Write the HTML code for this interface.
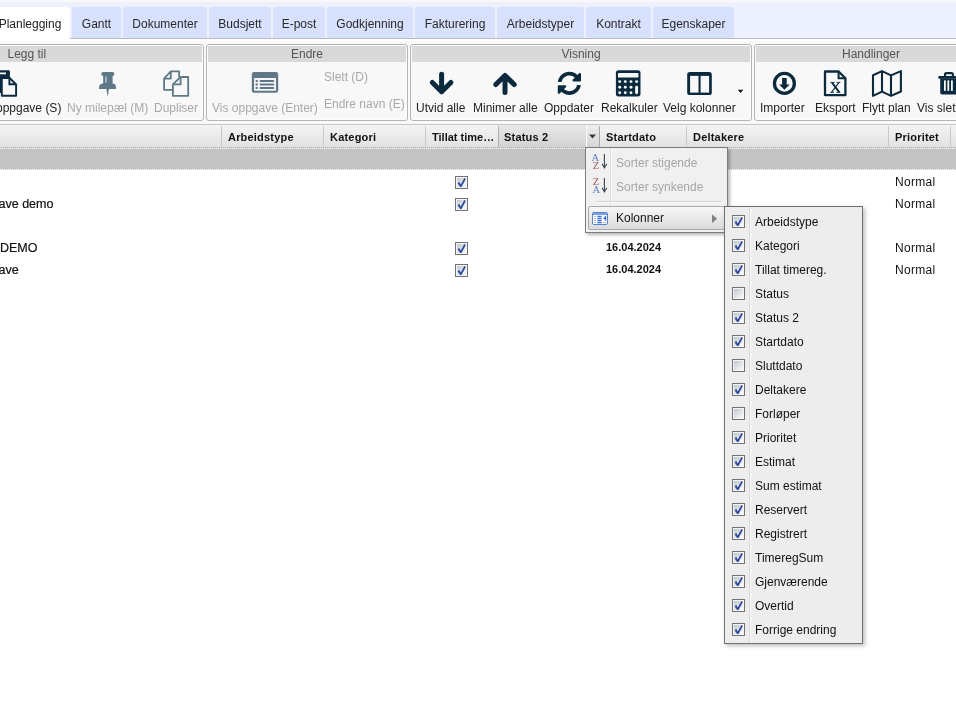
<!DOCTYPE html>
<html><head><meta charset="utf-8">
<style>
*{box-sizing:border-box;margin:0;padding:0}
html,body{width:956px;height:704px;overflow:hidden;-webkit-font-smoothing:antialiased;background:#fff;font-family:"Liberation Sans",sans-serif;font-size:12px;color:#222}
.a{position:absolute;white-space:nowrap}
.t12{font-size:12px;line-height:14px}
.t11{font-size:11px;line-height:13px}
.tab{position:absolute;top:7px;height:31px;background:#d7e0fc;border-radius:3px 3px 0 0}
.tab span{position:absolute;top:10px;left:0;right:0;text-align:center;font-size:12px;line-height:14px;color:#2a2a2a}
.grp{position:absolute;top:44px;height:77px;border:1px solid #b4b4b4;border-radius:3px;background:#f8f8f8;box-shadow:inset 0 0 0 1px #fdfdfd}
.gh{position:absolute;top:1px;left:1px;right:1px;height:16px;background:#d9d9d9;color:#555;font-size:12px;line-height:14px;text-align:center}
.gh span{position:relative;top:1px}
.lbl{position:absolute;white-space:nowrap;top:101px;font-size:12px;line-height:14px;color:#222}
.dis{color:#a8a8a8}
.sep{position:absolute;top:126px;width:1px;height:21px;background:#c9c9c9}
.hd{position:absolute;white-space:nowrap;top:131px;font-size:11px;line-height:13px;font-weight:bold;color:#111;letter-spacing:0.2px}
.cb{position:absolute;width:13px;height:13px;border:1px solid #727272;background:linear-gradient(135deg,#b9bfca 0%,#dfe2e8 50%,#fff 100%);box-shadow:inset 0 0 0 1px #f4f4f4}
.cb svg{position:absolute;left:-1px;top:-1px}
.nm{font-size:12.5px;line-height:15px;color:#111;-webkit-text-stroke:0.2px #111}
.mi{position:absolute;white-space:nowrap;font-size:12px;line-height:14px;color:#111}
</style></head><body><div style="position:absolute;left:0;top:0;width:956px;height:704px;will-change:transform;overflow:hidden">

<!-- top strip -->
<div class="a" style="left:0;top:0;width:956px;height:2px;background:#f8f8f8"></div>
<div class="a" style="left:0;top:2px;width:956px;height:36px;background:#edf1fd"></div>
<div class="a" style="left:70px;top:38px;width:886px;height:1px;background:#bcbcbc"></div>
<div class="a" style="left:0;top:41px;width:956px;height:83px;background:#f9f9f9"></div>
<div class="a" style="left:0;top:39px;width:956px;height:2px;background:#fff"></div>

<!-- tabs -->
<div class="tab" style="left:-10px;width:80px;height:32px;background:#fff"><span style="left:0;right:0;padding-left:0px;color:#222">Planlegging</span></div>
<div class="tab" style="left:72px;width:49px"><span>Gantt</span></div>
<div class="tab" style="left:123px;width:84px"><span>Dokumenter</span></div>
<div class="tab" style="left:209px;width:62px"><span>Budsjett</span></div>
<div class="tab" style="left:273px;width:52px"><span>E-post</span></div>
<div class="tab" style="left:327px;width:86px"><span>Godkjenning</span></div>
<div class="tab" style="left:415px;width:80px"><span>Fakturering</span></div>
<div class="tab" style="left:497px;width:87px"><span>Arbeidstyper</span></div>
<div class="tab" style="left:586px;width:65px"><span>Kontrakt</span></div>
<div class="tab" style="left:653px;width:81px"><span>Egenskaper</span></div>

<!-- groups -->
<div class="grp" style="left:-40px;width:244px"><div class="gh" style="text-align:left;padding-left:45.5px"><span>Legg til</span></div></div>
<div class="grp" style="left:206px;width:202px"><div class="gh"><span>Endre</span></div></div>
<div class="grp" style="left:410px;width:342px"><div class="gh"><span>Visning</span></div></div>
<div class="grp" style="left:754px;width:240px"><div class="gh" style="text-align:left;padding-left:86px"><span>Handlinger</span></div></div>

<!-- labels -->
<div class="lbl" style="left:-4px">oppgave (S)</div>
<div class="lbl dis" style="left:67px">Ny milepæl (M)</div>
<div class="lbl dis" style="left:154px">Dupliser</div>
<div class="lbl dis" style="left:212px">Vis oppgave (Enter)</div>
<div class="lbl dis" style="left:324px;top:70px">Slett (D)</div>
<div class="lbl dis" style="left:324px;top:97px">Endre navn (E)</div>
<div class="lbl" style="left:416px">Utvid alle</div>
<div class="lbl" style="left:473px">Minimer alle</div>
<div class="lbl" style="left:544px">Oppdater</div>
<div class="lbl" style="left:601px">Rekalkuler</div>
<div class="lbl" style="left:663px">Velg kolonner</div>
<div class="lbl" style="left:760px">Importer</div>
<div class="lbl" style="left:815px">Eksport</div>
<div class="lbl" style="left:862px">Flytt plan</div>
<div class="lbl" style="left:917px">Vis slettede</div>

<svg class="a" style="left:0;top:0;overflow:visible" width="956" height="704" viewBox="0 0 956 704">
<g fill="#0c2a3e">
<!-- ny oppgave (clipped) -->
<path d="M-12 70.3H8.7a1.2 1.2 0 0 1 1.2 1.2V77H2.2V93H-12Z"/>
<rect x="-12" y="72.5" width="18" height="1.8" fill="#f8f8f8"/>
</g>
<path d="M1.8 78H9.6L16.1 84.5V95.8H1.8Z" fill="#f8f8f8" stroke="#0c2a3e" stroke-width="1.9" stroke-linejoin="round"/>
<path d="M9.4 77.6V84.3H16" fill="none" stroke="#0c2a3e" stroke-width="1.9"/>
<!-- pin -->
<g fill="#5f7887">
<rect x="101.2" y="72" width="13.2" height="4" rx="2"/>
<rect x="103.2" y="75" width="9.4" height="9.5"/>
<path d="M99 89V87.4C99 85.2 101 83.6 103.2 83.6H112.6C114.8 83.6 116 85.2 116 87.4V89Z"/>
<path d="M106.3 88.5H109.1L107.7 96.8Z"/>
</g>
<rect x="105" y="76.5" width="2" height="6.3" fill="#a3b2bb"/>
<!-- duplicate -->
<g fill="none" stroke="#5f7887" stroke-width="1.8" stroke-linejoin="round">
<path d="M179.1 77V71.4H170.8L164.1 78.6V89.8H172.8"/>
<path d="M170.8 71.6V78.6H164.2"/>
<path d="M180.6 77H188.2V95.8H172.9V84.4L180.6 76.9Z"/>
<path d="M180.6 77.2V84.4H173"/>
</g>
<!-- vis oppgave -->
<rect x="251.8" y="72" width="26.4" height="20.7" rx="2.2" fill="#5f7887"/>
<rect x="254.1" y="78" width="21.9" height="12.7" fill="#f8f8f8"/>
<g fill="#5f7887">
<circle cx="256.7" cy="80.9" r="1.2"/><circle cx="256.7" cy="84.4" r="1.2"/><circle cx="256.7" cy="87.9" r="1.2"/>
<rect x="259.5" y="79.9" width="14.8" height="2" rx="1"/><rect x="259.5" y="83.4" width="14.8" height="2" rx="1"/><rect x="259.5" y="86.9" width="14.8" height="2" rx="1"/>
</g>
<!-- arrows -->
<g fill="none" stroke="#0c2a3e" stroke-width="5" stroke-linecap="round" stroke-linejoin="round">
<path d="M441.6 74.3V90.5M432.3 82.4L441.6 91.7L450.9 82.4"/>
<path d="M505 92.4V76M495.8 84.6L505 75.4L514.2 84.6"/>
</g>
<!-- refresh -->
<path transform="translate(557.4 71.4) scale(0.0468)" fill="#0c2a3e" d="M370.72 133.28C339.458 104.008 298.888 87.962 255.848 88c-77.458.068-144.328 53.178-162.791 126.85-1.344 5.363-6.122 9.15-11.651 9.15H24.103c-7.498 0-13.194-6.807-11.807-14.176C33.933 94.924 134.813 8 256 8c66.448 0 126.791 26.136 171.315 68.685L463.03 40.97C478.149 25.851 504 36.559 504 57.941V192c0 13.255-10.745 24-24 24H345.941c-21.382 0-32.090-25.851-16.971-40.971l41.75-41.749zM32 296h134.059c21.382 0 32.090 25.851 16.971 40.971l-41.75 41.750c31.262 29.273 71.835 45.319 114.876 45.280 77.418-.07 144.315-53.144 162.787-126.849 1.344-5.363 6.122-9.150 11.651-9.150h57.304c7.498 0 13.194 6.807 11.807 14.176C478.067 417.076 377.187 504 256 504c-66.448 0-126.791-26.136-171.315-68.685L48.970 471.030C33.851 486.149 8 475.441 8 454.059V320c0-13.255 10.745-24 24-24z"/>
<!-- calculator -->
<rect x="615.9" y="70.3" width="24.6" height="26.1" rx="2.6" fill="#0c2a3e"/>
<rect x="618" y="72.9" width="20.4" height="4.7" rx="0.6" fill="#f8f8f8"/>
<g fill="#f8f8f8">
<circle cx="619.7" cy="81.6" r="1.45"/><circle cx="625.3" cy="81.6" r="1.45"/><circle cx="631" cy="81.6" r="1.45"/><circle cx="636.6" cy="81.6" r="1.45"/>
<circle cx="619.7" cy="87.2" r="1.45"/><circle cx="625.3" cy="87.2" r="1.45"/><circle cx="631" cy="87.2" r="1.45"/>
<circle cx="619.7" cy="92.8" r="1.45"/><circle cx="625.3" cy="92.8" r="1.45"/><circle cx="631" cy="92.8" r="1.45"/>
<rect x="635.15" y="85.7" width="2.9" height="8.6" rx="1.45"/>
</g>
<!-- columns -->
<rect x="687.2" y="72.1" width="24.6" height="22.9" rx="2.6" fill="#0c2a3e"/>
<rect x="690.1" y="75.9" width="8.4" height="16.7" fill="#f8f8f8"/>
<rect x="700.6" y="75.9" width="8.5" height="16.7" fill="#f8f8f8"/>
<path d="M737.8 89.7H743.3L740.55 93.1Z" fill="#111"/>
<!-- import -->
<circle cx="784.4" cy="83.4" r="9.95" fill="none" stroke="#0c2a3e" stroke-width="3.3"/>
<path d="M782.1 78.1H786.7V84.4H789.7L784.4 89.7L779.1 84.4H782.1Z" fill="#0c2a3e"/>
<!-- excel -->
<path d="M825 71.5H838.6L845.4 78.3V95.2H825Z" fill="none" stroke="#0c2a3e" stroke-width="2.3" stroke-linejoin="round"/>
<path d="M838.6 71.5V78.3H845.4" fill="none" stroke="#0c2a3e" stroke-width="2"/>
<g stroke="#0c2a3e" fill="none">
<path d="M832 82.6L839.3 92.4" stroke-width="1.9"/>
<path d="M838.9 82.6L831.5 92.4" stroke-width="1.1"/>
<path d="M830.4 82.4H834.6M836.6 82.4H840.3M830.4 92.4H834M836.5 92.4H840.4" stroke-width="0.9"/>
</g>
<!-- map -->
<g fill="none" stroke="#0c2a3e" stroke-width="2.1" stroke-linejoin="round">
<path d="M873 75.2L882 71.1L891 75.4L900.9 71.1V91.5L891 95.9L882 91.6L873 95.9Z"/>
<path d="M882 71.2V91.6M891 75.4V95.8"/>
</g>
<!-- trash -->
<g fill="#0c2a3e">
<path d="M944 77V74.2C944 72.8 945 72 946.4 72H951.4C952.8 72 953.9 72.8 953.9 74.2V77H951.8V74.3H946.1V77Z"/>
<rect x="938.3" y="76" width="25" height="2.7" rx="0.8"/>
<path d="M940.2 78.6H960V92.6C960 93.8 959.2 94.6 958 94.6H942.2C941 94.6 940.2 93.8 940.2 92.6Z"/>
</g>
<g fill="#f8f8f8">
<rect x="944" y="80.4" width="1.8" height="10.5"/><rect x="947.4" y="80.4" width="1.8" height="10.5"/><rect x="951" y="80.4" width="1.8" height="10.5"/>
</g>
</svg>


<!-- grid header -->
<div class="a" style="left:0;top:124px;width:956px;height:1px;background:#c6c6c6"></div>
<div class="a" style="left:0;top:125px;width:956px;height:22px;background:linear-gradient(#f4f4f4,#e2e2e2)"></div>
<div class="a" style="left:499px;top:125px;width:87px;height:22px;background:linear-gradient(#e9e9e9,#d2d2d2)"></div>
<div class="a" style="left:587px;top:125px;width:12px;height:22px;background:linear-gradient(#eeeeee,#d6d6d6)"></div>
<div class="sep" style="left:221px"></div>
<div class="sep" style="left:323px"></div>
<div class="sep" style="left:425px"></div>
<div class="sep" style="left:498px;background:#b0b0b0"></div>
<div class="sep" style="left:586px;background:#fafafa"></div>
<div class="sep" style="left:599px;background:#a8a8a8"></div>
<div class="sep" style="left:686px"></div>
<div class="sep" style="left:888px"></div>
<div class="sep" style="left:950px"></div>
<div class="hd" style="left:228px">Arbeidstype</div>
<div class="hd" style="left:330px">Kategori</div>
<div class="hd" style="left:432px;letter-spacing:0">Tillat time…</div>
<div class="hd" style="left:504px">Status 2</div>
<div class="hd" style="left:606px">Startdato</div>
<div class="hd" style="left:693px">Deltakere</div>
<div class="hd" style="left:895px">Prioritet</div>
<svg class="a" style="left:588px;top:133px" width="9" height="7"><path d="M1 1.5 H8 L4.5 5.5 Z" fill="#3a3a3a"/></svg>

<!-- group row -->
<div class="a" style="left:0;top:147px;width:956px;height:23px;background:#c4c4c4"></div>
<div class="a" style="left:0;top:148px;width:956px;height:1px;background:repeating-linear-gradient(90deg,#fff 0 1px,transparent 1px 2px)"></div>
<div class="a" style="left:0;top:169px;width:956px;height:1px;background:repeating-linear-gradient(90deg,#fff 0 1px,#c4c4c4 1px 2px)"></div>

<!-- rows -->
<div class="a nm" style="left:-1.5px;top:196.5px">ave demo</div>
<div class="a nm" style="left:0px;top:240.5px">DEMO</div>
<div class="a nm" style="left:-1.5px;top:262.5px">ave</div>

<div class="a t11" style="left:606px;top:241px;font-weight:bold;color:#111">16.04.2024</div>
<div class="a t11" style="left:606px;top:263px;font-weight:bold;color:#111">16.04.2024</div>
<div class="a t12" style="letter-spacing:0.3px;left:895px;top:174.5px;color:#111">Normal</div>
<div class="a t12" style="letter-spacing:0.3px;left:895px;top:196.5px;color:#111">Normal</div>
<div class="a t12" style="letter-spacing:0.3px;left:895px;top:240.5px;color:#111">Normal</div>
<div class="a t12" style="letter-spacing:0.3px;left:895px;top:262.5px;color:#111">Normal</div>

<div class="cb" style="left:455px;top:176px"><svg width="13" height="13" viewBox="0 0 13 13"><path d="M2.6 7.2L4.3 6.1L5.8 8.4L9.3 2.1L10.8 3.1L6.5 11L5.1 11Z" fill="#2e4c9c"/></svg></div>
<div class="cb" style="left:455px;top:198px"><svg width="13" height="13" viewBox="0 0 13 13"><path d="M2.6 7.2L4.3 6.1L5.8 8.4L9.3 2.1L10.8 3.1L6.5 11L5.1 11Z" fill="#2e4c9c"/></svg></div>
<div class="cb" style="left:455px;top:242px"><svg width="13" height="13" viewBox="0 0 13 13"><path d="M2.6 7.2L4.3 6.1L5.8 8.4L9.3 2.1L10.8 3.1L6.5 11L5.1 11Z" fill="#2e4c9c"/></svg></div>
<div class="cb" style="left:455px;top:264px"><svg width="13" height="13" viewBox="0 0 13 13"><path d="M2.6 7.2L4.3 6.1L5.8 8.4L9.3 2.1L10.8 3.1L6.5 11L5.1 11Z" fill="#2e4c9c"/></svg></div>

<!-- column menu -->
<div class="a" style="left:585px;top:147px;width:143px;height:86px;background:#f0f0f0;border:1px solid #7c7c7c;box-shadow:2px 2px 3px rgba(0,0,0,0.28)"></div>
<div class="a" style="left:610px;top:148px;width:1px;height:84px;background:#dcdcdc"></div>
<div class="a" style="left:611px;top:148px;width:1px;height:84px;background:#fbfbfb"></div>
<div class="a" style="left:597px;top:201px;width:125px;height:1px;background:#d2d2d2"></div>
<div class="a" style="left:597px;top:202px;width:125px;height:1px;background:#fdfdfd"></div>
<svg class="a" style="left:588px;top:150px" width="22" height="48" viewBox="0 0 22 48">
<g font-family="Liberation Serif" font-size="10.5">
<text x="3.6" y="11" fill="#5b7ec4">A</text><text x="4.8" y="19" fill="#a05a5a">Z</text>
<text x="4.8" y="35" fill="#a05a5a">Z</text><text x="4.6" y="43" fill="#5b7ec4">A</text>
</g>
<g stroke="#3c4450" fill="none" stroke-width="1.1">
<path d="M16.4 4V17.5M14 13.8L16.4 18L18.8 13.8"/>
<path d="M16.4 28V41.5M14 37.8L16.4 42L18.8 37.8"/>
</g>
</svg>
<div class="mi" style="left:616px;top:155.5px;color:#a6a6a6">Sorter stigende</div>
<div class="mi" style="left:616px;top:179.5px;color:#a6a6a6">Sorter synkende</div>
<div class="a" style="left:588px;top:206px;width:137px;height:24px;border:1px solid #a9a9a9;border-radius:2px;background:linear-gradient(#f8f8f8,#dadada)"></div>
<svg class="a" style="left:592px;top:212px" width="16" height="13" viewBox="0 0 16 13">
<rect x="0.5" y="0.5" width="15" height="12" rx="1.5" fill="#fff" stroke="#5583cf"/>
<rect x="1" y="1" width="14" height="2" fill="#7aa3e2"/>
<rect x="4.8" y="3" width="5.4" height="9" fill="#d5e2f8"/>
<g fill="#3a6be0"><rect x="5.6" y="4" width="3.8" height="1.1"/><rect x="5.6" y="6" width="3.8" height="1.1"/><rect x="5.6" y="8" width="3.8" height="1.1"/><rect x="5.6" y="10" width="3.8" height="1.1"/></g>
<g fill="#b0b0b0"><rect x="2" y="4" width="2" height="0.8"/><rect x="2" y="6" width="2" height="0.8"/><rect x="2" y="8" width="2" height="0.8"/><rect x="2" y="10" width="2" height="0.8"/><rect x="11" y="10" width="3" height="0.9"/></g>
<path d="M11.2 6.3L14 4V8.6Z" fill="#2f62e0"/>
<rect x="13.2" y="4" width="1" height="4.6" fill="#2f62e0"/>
</svg>
<div class="mi" style="left:616px;top:211px;color:#141414">Kolonner</div>
<svg class="a" style="left:711px;top:214px" width="8" height="10"><path d="M1 0.6L6.2 4.8L1 9Z" fill="#808080"/></svg>

<!-- submenu -->
<div class="a" style="left:724px;top:206px;width:139px;height:438px;background:#ededed;border:1px solid #6f6f6f;box-shadow:2px 2px 4px rgba(0,0,0,0.25)"></div>
<div class="a" style="left:749px;top:207px;width:1px;height:436px;background:#d9d9d9"></div>
<div class="a" style="left:750px;top:207px;width:1px;height:436px;background:#fafafa"></div>
<div class="cb" style="left:732px;top:215px"><svg width="13" height="13" viewBox="0 0 13 13"><path d="M2.6 7.2L4.3 6.1L5.8 8.4L9.3 2.1L10.8 3.1L6.5 11L5.1 11Z" fill="#2e4c9c"/></svg></div><div class="mi" style="left:755px;top:215px">Arbeidstype</div>
<div class="cb" style="left:732px;top:239px"><svg width="13" height="13" viewBox="0 0 13 13"><path d="M2.6 7.2L4.3 6.1L5.8 8.4L9.3 2.1L10.8 3.1L6.5 11L5.1 11Z" fill="#2e4c9c"/></svg></div><div class="mi" style="left:755px;top:239px">Kategori</div>
<div class="cb" style="left:732px;top:263px"><svg width="13" height="13" viewBox="0 0 13 13"><path d="M2.6 7.2L4.3 6.1L5.8 8.4L9.3 2.1L10.8 3.1L6.5 11L5.1 11Z" fill="#2e4c9c"/></svg></div><div class="mi" style="left:755px;top:263px">Tillat timereg.</div>
<div class="cb" style="left:732px;top:287px"></div><div class="mi" style="left:755px;top:287px">Status</div>
<div class="cb" style="left:732px;top:311px"><svg width="13" height="13" viewBox="0 0 13 13"><path d="M2.6 7.2L4.3 6.1L5.8 8.4L9.3 2.1L10.8 3.1L6.5 11L5.1 11Z" fill="#2e4c9c"/></svg></div><div class="mi" style="left:755px;top:311px">Status 2</div>
<div class="cb" style="left:732px;top:335px"><svg width="13" height="13" viewBox="0 0 13 13"><path d="M2.6 7.2L4.3 6.1L5.8 8.4L9.3 2.1L10.8 3.1L6.5 11L5.1 11Z" fill="#2e4c9c"/></svg></div><div class="mi" style="left:755px;top:335px">Startdato</div>
<div class="cb" style="left:732px;top:359px"></div><div class="mi" style="left:755px;top:359px">Sluttdato</div>
<div class="cb" style="left:732px;top:383px"><svg width="13" height="13" viewBox="0 0 13 13"><path d="M2.6 7.2L4.3 6.1L5.8 8.4L9.3 2.1L10.8 3.1L6.5 11L5.1 11Z" fill="#2e4c9c"/></svg></div><div class="mi" style="left:755px;top:383px">Deltakere</div>
<div class="cb" style="left:732px;top:407px"></div><div class="mi" style="left:755px;top:407px">Forløper</div>
<div class="cb" style="left:732px;top:431px"><svg width="13" height="13" viewBox="0 0 13 13"><path d="M2.6 7.2L4.3 6.1L5.8 8.4L9.3 2.1L10.8 3.1L6.5 11L5.1 11Z" fill="#2e4c9c"/></svg></div><div class="mi" style="left:755px;top:431px">Prioritet</div>
<div class="cb" style="left:732px;top:455px"><svg width="13" height="13" viewBox="0 0 13 13"><path d="M2.6 7.2L4.3 6.1L5.8 8.4L9.3 2.1L10.8 3.1L6.5 11L5.1 11Z" fill="#2e4c9c"/></svg></div><div class="mi" style="left:755px;top:455px">Estimat</div>
<div class="cb" style="left:732px;top:479px"><svg width="13" height="13" viewBox="0 0 13 13"><path d="M2.6 7.2L4.3 6.1L5.8 8.4L9.3 2.1L10.8 3.1L6.5 11L5.1 11Z" fill="#2e4c9c"/></svg></div><div class="mi" style="left:755px;top:479px">Sum estimat</div>
<div class="cb" style="left:732px;top:503px"><svg width="13" height="13" viewBox="0 0 13 13"><path d="M2.6 7.2L4.3 6.1L5.8 8.4L9.3 2.1L10.8 3.1L6.5 11L5.1 11Z" fill="#2e4c9c"/></svg></div><div class="mi" style="left:755px;top:503px">Reservert</div>
<div class="cb" style="left:732px;top:527px"><svg width="13" height="13" viewBox="0 0 13 13"><path d="M2.6 7.2L4.3 6.1L5.8 8.4L9.3 2.1L10.8 3.1L6.5 11L5.1 11Z" fill="#2e4c9c"/></svg></div><div class="mi" style="left:755px;top:527px">Registrert</div>
<div class="cb" style="left:732px;top:551px"><svg width="13" height="13" viewBox="0 0 13 13"><path d="M2.6 7.2L4.3 6.1L5.8 8.4L9.3 2.1L10.8 3.1L6.5 11L5.1 11Z" fill="#2e4c9c"/></svg></div><div class="mi" style="left:755px;top:551px">TimeregSum</div>
<div class="cb" style="left:732px;top:575px"><svg width="13" height="13" viewBox="0 0 13 13"><path d="M2.6 7.2L4.3 6.1L5.8 8.4L9.3 2.1L10.8 3.1L6.5 11L5.1 11Z" fill="#2e4c9c"/></svg></div><div class="mi" style="left:755px;top:575px">Gjenværende</div>
<div class="cb" style="left:732px;top:599px"><svg width="13" height="13" viewBox="0 0 13 13"><path d="M2.6 7.2L4.3 6.1L5.8 8.4L9.3 2.1L10.8 3.1L6.5 11L5.1 11Z" fill="#2e4c9c"/></svg></div><div class="mi" style="left:755px;top:599px">Overtid</div>
<div class="cb" style="left:732px;top:623px"><svg width="13" height="13" viewBox="0 0 13 13"><path d="M2.6 7.2L4.3 6.1L5.8 8.4L9.3 2.1L10.8 3.1L6.5 11L5.1 11Z" fill="#2e4c9c"/></svg></div><div class="mi" style="left:755px;top:623px">Forrige endring</div>


</div></body></html>
